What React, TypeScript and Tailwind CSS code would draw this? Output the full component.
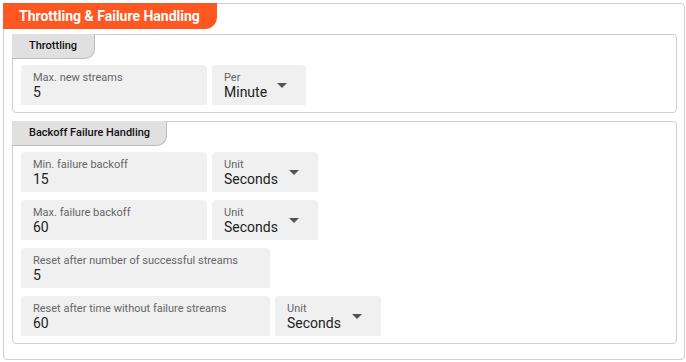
const font = { fontFamily: 'Roboto, "Liberation Sans", sans-serif' }

type FieldProps = { label: string; value: string; width: string }

const TextField = ({ label, value, width }: FieldProps) => (
  <div className={`h-[40px] ${width} rounded-t-[4px] bg-[#f0f0f0] px-[12px] pt-[6px]`}>
    <div className="text-[11px] leading-[13px] text-[#666]">{label}</div>
    <div className="text-[14px] leading-[16px] text-[#222]">{value}</div>
  </div>
)

const SelectField = ({ label, value, width }: FieldProps) => (
  <div className={`flex h-[40px] ${width} items-center justify-between rounded-t-[4px] bg-[#f0f0f0] pl-[12px] pr-[19px]`}>
    <div className="self-start pt-[6px]">
      <div className="text-[11px] leading-[13px] text-[#666]">{label}</div>
      <div className="text-[14px] leading-[16px] text-[#222]">{value}</div>
    </div>
    <span className="h-0 w-0 border-x-[5px] border-t-[5px] border-x-transparent border-t-[#555]"></span>
  </div>
)

const SectionTab = ({ title, width }: { title: string; width: string }) => (
  <div
    className={`-ml-px -mt-px flex h-[25px] ${width} items-center rounded-br-[10px] border-r border-b border-[#bdbdbd] bg-[#e0e0e0] pl-[17px] text-[11px] font-medium text-[#111]`}
  >
    {title}
  </div>
)

const App = () => {
  return (
    <div className="min-h-[362px] bg-white pl-[3px] pt-[3px]" style={font}>
      <div className="w-[682px] rounded-[4px] border border-[#cfcfcf] pb-[15px]">
        <div className="-ml-px -mt-px flex h-[26px] w-[214px] items-center rounded-br-[12px] bg-[#ff5722] pl-[16px] text-[14px] font-bold text-white">
          Throttling &amp; Failure Handling
        </div>

        <div className="mt-[5px] flex flex-col gap-[8px] pl-[8px] pr-[7px]">
          <section className="rounded-[4px] border border-[#cfcfcf] pb-[7px]">
            <SectionTab title="Throttling" width="w-[83px]" />
            <div className="mt-[6px] flex gap-[5px] pl-[8px]">
              <TextField label="Max. new streams" value="5" width="w-[186px]" />
              <SelectField label="Per" value="Minute" width="w-[94px]" />
            </div>
          </section>

          <section className="rounded-[4px] border border-[#cfcfcf] pb-[7px]">
            <SectionTab title="Backoff Failure Handling" width="w-[155px]" />
            <div className="mt-[6px] flex flex-col gap-[8px] pl-[8px]">
              <div className="flex gap-[5px]">
                <TextField label="Min. failure backoff" value="15" width="w-[186px]" />
                <SelectField label="Unit" value="Seconds" width="w-[106px]" />
              </div>
              <div className="flex gap-[5px]">
                <TextField label="Max. failure backoff" value="60" width="w-[186px]" />
                <SelectField label="Unit" value="Seconds" width="w-[106px]" />
              </div>
              <div className="flex gap-[5px]">
                <TextField label="Reset after number of successful streams" value="5" width="w-[249px]" />
              </div>
              <div className="flex gap-[5px]">
                <TextField label="Reset after time without failure streams" value="60" width="w-[249px]" />
                <SelectField label="Unit" value="Seconds" width="w-[106px]" />
              </div>
            </div>
          </section>
        </div>
      </div>
    </div>
  )
}

export default App
